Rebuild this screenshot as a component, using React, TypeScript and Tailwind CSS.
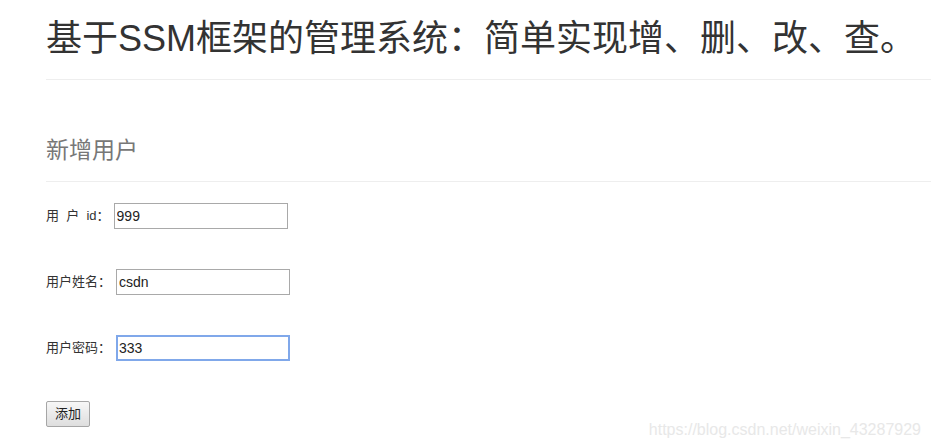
import type { ReactNode } from "react";

const FONT = "font-['Liberation_Sans','Noto_Sans_CJK_SC',sans-serif]";

function Field({ label, value, focused, gap }: { label: ReactNode; value: string; focused?: boolean; gap: string }) {
  return (
    <div className="flex items-center h-[26px]">
      <span className={`text-[13px] text-[#333] ${gap}`}>{label}</span>
      <input
        readOnly
        value={value}
        className={`w-[174px] h-[26px] text-[14px] text-[#222] bg-white outline-none ${
          focused ? "border-2 border-[#80a8ea] px-[1px]" : "border border-[#a9a9a9] px-[2px]"
        }`}
      />
    </div>
  );
}

export default function App() {
  return (
    <div className={`relative min-h-[446px] bg-white pl-[46px] ${FONT}`}>
      <div className="pt-[19px] pb-[20px] border-b border-[#eee]">
        <h1 className="text-[36px] leading-[40px] text-[#333] whitespace-nowrap">
          基于SSM框架的管理系统：简单实现增、删、改、查。
        </h1>
      </div>

      <div className="mt-[57px] pb-[18px] border-b border-[#eee]">
        <h3 className="text-[23px] leading-[26px] text-[#777]">新增用户</h3>
      </div>

      <div className="flex flex-col gap-[40px] mt-[21px]">
        <Field label={<>用&nbsp;&nbsp;户&nbsp;&nbsp;id：</>} value="999" gap="mr-[4px]" />
        <Field label="用户姓名：" value="csdn" gap="mr-[5px]" />
        <Field label="用户密码：" value="333" focused gap="mr-[5px]" />
        <div>
          <button className="h-[26px] px-[8px] text-[13px] text-[#222] border border-[#a6a6a6] rounded-[2px] bg-gradient-to-b from-[#f7f7f7] to-[#dedede]">
            添加
          </button>
        </div>
      </div>

      <div className="absolute right-[10px] top-[418px] text-[16px] text-[#e8e8e8] pointer-events-none">
        https://blog.csdn.net/weixin_43287929
      </div>
    </div>
  );
}
